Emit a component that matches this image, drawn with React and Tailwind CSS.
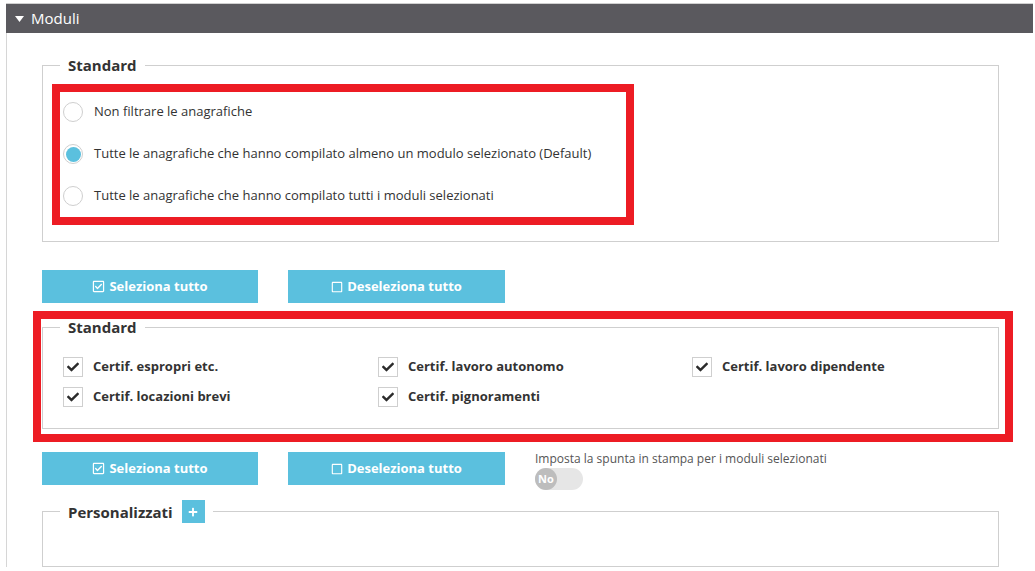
import React from 'react';
import { FaRegCheckSquare, FaRegSquare, FaCheck, FaPlus } from 'react-icons/fa';

const radios = [
  { label: 'Non filtrare le anagrafiche', checked: false },
  { label: 'Tutte le anagrafiche che hanno compilato almeno un modulo selezionato (Default)', checked: true },
  { label: 'Tutte le anagrafiche che hanno compilato tutti i moduli selezionati', checked: false },
];

const moduli = [
  'Certif. espropri etc.',
  'Certif. lavoro autonomo',
  'Certif. lavoro dipendente',
  'Certif. locazioni brevi',
  'Certif. pignoramenti',
];

function Radio({ checked, label }) {
  return (
    <label className="flex h-5 items-center gap-[11px]">
      <span className="flex h-5 w-5 items-center justify-center rounded-full border border-[#cfcfcf] bg-white">
        {checked && <span className="h-[15px] w-[15px] rounded-full bg-[#5bc0de]" />}
      </span>
      <span className="text-[13px] text-[#333]">{label}</span>
    </label>
  );
}

function Check({ label }) {
  return (
    <label className="flex h-5 items-center gap-[10px]">
      <span className="flex h-5 w-5 items-center justify-center border border-[#cfcfcf] bg-white">
        <FaCheck className="text-[#2b2b2b]" size={12} />
      </span>
      <span className="text-[13px] font-bold text-[#333]">{label}</span>
    </label>
  );
}

function Buttons({ children }) {
  return (
    <div className="flex items-start gap-[30px]">
      <button className="flex h-[33px] w-[216px] items-center justify-center gap-1 bg-[#5bc0de] text-[13px] font-bold text-white">
        <FaRegCheckSquare size={13} /> Seleziona tutto
      </button>
      <button className="flex h-[33px] w-[217px] items-center justify-center gap-1 bg-[#5bc0de] text-[13px] font-bold text-white">
        <FaRegSquare size={12} /> Deseleziona tutto
      </button>
      {children}
    </div>
  );
}

export default function App() {
  return (
    <div className="min-h-[571px] bg-white pt-[3px] font-['Open_Sans',sans-serif]">
      <div className="ml-[6px] mr-[2px] border-t border-[#d0d0d0]">
        <div className="flex h-[29px] items-center gap-[7px] bg-[#5a595e] pl-[9px] text-[15px] text-white">
          <svg width="9" height="6" viewBox="0 0 9 6" className="fill-white">
            <path d="M0 0h9L4.5 6z" />
          </svg>
          Moduli
        </div>
        <div className="border-l border-[#d6d6d6] pl-[35px] pr-[34px] pt-[22px]">
          <fieldset className="border border-[#cfcfcf]">
            <legend className="ml-[17px] px-2 text-[15px] font-bold leading-5 text-[#333]">Standard</legend>
            <div className="px-[9px] pb-[16px] pt-[9px]">
              <div className="w-[582px] border-[8px] border-[#ed1c24] pb-[11px] pl-[3px] pt-[10px]">
                <div className="flex flex-col gap-[22px]">
                  {radios.map((r) => (
                    <Radio key={r.label} {...r} />
                  ))}
                </div>
              </div>
            </div>
          </fieldset>

          <div className="mt-[28px]">
            <Buttons />
          </div>

          <div className="relative mt-[14px]">
            <fieldset className="border border-[#cfcfcf]">
              <legend className="ml-[17px] px-2 text-[15px] font-bold leading-5 text-[#333]">Standard</legend>
              <div className="grid grid-cols-[315px_314px_1fr] gap-y-[10px] pb-[21px] pl-[20px] pt-[20px]">
                {moduli.map((m) => (
                  <Check key={m} label={m} />
                ))}
              </div>
            </fieldset>
            <div className="pointer-events-none absolute -left-[9px] -top-[6px] -bottom-[13px] -right-[14px] border-[8px] border-[#ed1c24]" />
          </div>

          <div className="mt-[23px]">
            <Buttons>
              <div className="-mt-[2px] flex flex-col gap-[1px]">
                <span className="text-[12px] leading-[17px] text-[#555]">Imposta la spunta in stampa per i moduli selezionati</span>
                <div className="flex h-[22px] w-[48px] items-center rounded-full bg-[#e6e6e6]">
                  <span className="flex h-[22px] w-[22px] items-center justify-center rounded-full bg-[#bdbdbd] text-[11px] font-bold text-white">
                    No
                  </span>
                </div>
              </div>
            </Buttons>
          </div>

          <fieldset className="mt-[10px] h-[67px] border border-[#cfcfcf]">
            <legend className="ml-[17px] flex items-center gap-[9px] px-2 text-[15px] font-bold leading-5 text-[#333]">
              Personalizzati
              <span className="flex h-[23px] w-[23px] items-center justify-center bg-[#5bc0de] text-white">
                <FaPlus size={10} />
              </span>
            </legend>
          </fieldset>
        </div>
      </div>
    </div>
  );
}
